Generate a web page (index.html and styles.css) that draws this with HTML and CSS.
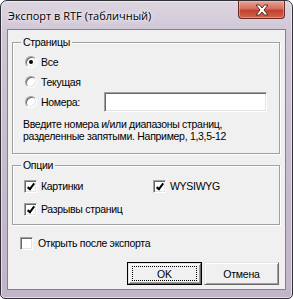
FILE: index.html
```html
<!DOCTYPE html>
<html lang="ru">

<head>
    <meta charset="UTF-8">
    <title>Экспорт в RTF (табличный)</title>
    <link rel="stylesheet" href="styles.css">
</head>

<body>
    <div class="window">
        <div class="titlebar">
            <span class="title">Экспорт в RTF (табличный)</span>
            <div class="close">
                <svg width="16" height="12" viewBox="0 0 16 12">
                    <path d="M2 1 L5.5 1 L8 4 L10.5 1 L14 1 L10 6 L14 11 L10.5 11 L8 8 L5.5 11 L2 11 L6 6 Z" fill="#fff" stroke="#5a2a24" stroke-width="1" stroke-linejoin="round"/>
                </svg>
            </div>
        </div>
        <div class="client">
            <fieldset class="group pages">
                <legend>Страницы</legend>
                <div class="inner">
                    <div class="opt"><span class="radio on"></span>Все</div>
                    <div class="opt"><span class="radio"></span>Текущая</div>
                    <div class="opt nums"><span class="radio"></span><span class="lbl">Номера:</span><span class="field"></span></div>
                    <p class="hint">Введите номера и/или диапазоны страниц,<br>разделенные запятыми. Например, 1,3,5-12</p>
                </div>
            </fieldset>
            <fieldset class="group options">
                <legend>Опции</legend>
                <div class="inner checks">
                    <div class="opt"><span class="check on"></span>Картинки</div>
                    <div class="opt"><span class="check on"></span>WYSIWYG</div>
                    <div class="opt"><span class="check on"></span>Разрывы страниц</div>
                </div>
            </fieldset>
            <div class="opt open"><span class="check"></span>Открыть после экспорта</div>
            <div class="buttons">
                <button class="btn default"><span class="face"><span class="focus">OK</span></span></button>
                <button class="btn"><span class="face">Отмена</span></button>
            </div>
        </div>
    </div>
</body>

</html>
```

FILE: styles.css
```css
body {
    margin: 0;
    font-family: "Liberation Sans", Arial, sans-serif;
    font-size: 10.5px;
    letter-spacing: -0.3px;
    color: #000;
    background: #fff;
}
.window {
    width: 293px;
    height: 299px;
    box-sizing: border-box;
    border: 1px solid #2f2f35;
    border-radius: 7px 7px 5px 5px;
    background: linear-gradient(to bottom, #dcd6e0 0%, #cfc5d5 12%, #c6bacd 60%, #c2b4c9 100%);
    box-shadow: inset 0 0 0 1px rgba(255, 255, 255, 0.55);
    padding: 0 6px;
}
.titlebar {
    height: 28px;
    display: flex;
    align-items: flex-start;
    justify-content: space-between;
}
.title {
    font-family: "Open Sans", "Noto Sans", sans-serif;
    font-size: 11px;
    letter-spacing: 0;
    margin: 7px 0 0 1px;
    text-shadow: 0 0 6px rgba(255, 255, 255, 0.9), 0 0 3px rgba(255, 255, 255, 0.9);
}
.close {
    width: 47px;
    height: 18px;
    box-sizing: border-box;
    margin-right: 1px;
    border: 1px solid #6b2a22;
    border-top: none;
    border-radius: 0 0 4px 4px;
    background: linear-gradient(to bottom, #e8a597 0%, #d66e5d 45%, #c1412f 55%, #d1654e 100%);
    box-shadow: inset 0 0 0 1px rgba(255, 200, 190, 0.45);
    display: flex;
    align-items: center;
    justify-content: center;
}
.client {
    height: 261px;
    box-sizing: border-box;
    border: 1px solid #868189;
    background: #f0f0f0;
    padding: 6px 4px 0 4px;
}

/* classic etched group box */
.group {
    margin: 0;
    padding: 0;
    width: 268px;
    box-sizing: border-box;
    border: 1px solid #a0a0a0;
    box-shadow: inset 1px 1px 0 #fff, 1px 1px 0 #fff;
}
.group legend {
    margin-left: 8px;
    padding: 0 2px;
    line-height: 13px;
    background: #f0f0f0;
}
.inner {
    padding: 3px 12px 11px 12px;
}
.opt {
    display: flex;
    align-items: center;
    height: 20px;
}
.radio {
    width: 12px;
    height: 12px;
    box-sizing: border-box;
    border-radius: 50%;
    border: 1px solid;
    border-color: #a0a0a0 #fff #fff #a0a0a0;
    box-shadow: inset 1px 1px 0 #696969, inset -1px -1px 0 #e3e3e3;
    background: #fff;
    margin-right: 4px;
    display: flex;
    align-items: center;
    justify-content: center;
}
.radio.on::after {
    content: "";
    width: 4px;
    height: 4px;
    border-radius: 50%;
    background: #000;
}
.nums .lbl {
    width: 63px;
}
.field {
    width: 163px;
    height: 20px;
    box-sizing: border-box;
    border: 1px solid;
    border-color: #a0a0a0 #fff #fff #a0a0a0;
    box-shadow: inset 1px 1px 0 #696969, inset -1px -1px 0 #e3e3e3;
    background: #fff;
}
.hint {
    margin: 6px 0 0 -2px;
    line-height: 12px;
}
.options {
    margin-top: 5px;
}
.checks {
    display: grid;
    grid-template-columns: 129px 1fr;
    row-gap: 3px;
    padding: 4px 11px 5px 11px;
}
.check {
    width: 13px;
    height: 13px;
    box-sizing: border-box;
    border: 1px solid;
    border-color: #a0a0a0 #fff #fff #a0a0a0;
    box-shadow: inset 1px 1px 0 #696969, inset -1px -1px 0 #e3e3e3;
    background: #fff;
    margin-right: 4px;
    position: relative;
}
.check.on::after {
    content: "";
    position: absolute;
    left: 4px;
    top: 1px;
    width: 2px;
    height: 6px;
    border: solid #000;
    border-width: 0 2px 2px 0;
    transform: rotate(38deg);
}
.open {
    margin: 8px 0 0 8px;
}
.open .check {
    margin-right: 5px;
}
.buttons {
    display: flex;
    justify-content: flex-end;
    gap: 2px;
    margin: 9px 2px 0 0;
}

/* classic 3d push buttons */
.btn {
    width: 75px;
    height: 23px;
    padding: 0;
    border: none;
    background: #f0f0f0;
    font-family: inherit;
    font-size: 10.5px;
    letter-spacing: -0.2px;
    color: #000;
    display: flex;
}
.face {
    flex: 1;
    display: flex;
    align-items: center;
    justify-content: center;
    box-sizing: border-box;
    border: 1px solid;
    border-color: #e3e3e3 #696969 #696969 #e3e3e3;
    box-shadow: inset 1px 1px 0 #fff, inset -1px -1px 0 #a0a0a0;
}
.btn.default {
    border: 1px solid #000;
}
.focus {
    display: flex;
    align-items: center;
    justify-content: center;
    width: 63px;
    height: 13px;
    border: 1px dotted #000;
}
```
